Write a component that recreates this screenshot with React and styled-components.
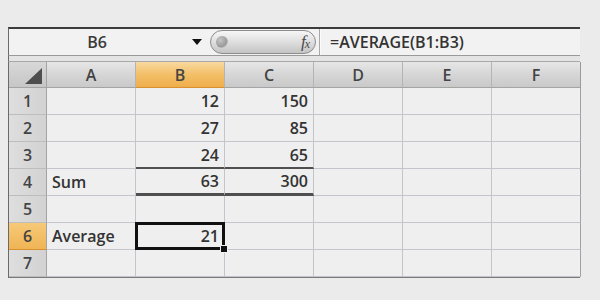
import React from "react";
import styled, { createGlobalStyle, css } from "styled-components";

const Global = createGlobalStyle`
  html, body { margin: 0; padding: 0; background: #ebebeb; }
  body { font-family: "Open Sans", "Liberation Sans", sans-serif; }
`;

const Page = styled.div`
  width: 600px;
  height: 300px;
  padding: 27px 0 0 8px;
  box-sizing: border-box;
  background: #ebebeb;
`;

const Sheet = styled.div`
  width: 572px;
  display: flex;
  flex-direction: column;
`;

const FormulaBar = styled.div`
  height: 29px;
  box-sizing: border-box;
  border-top: 2px solid #3c3c3c;
  border-left: 1px solid #6a6a6a;
  border-bottom: 1px solid #9a9a9a;
  display: flex;
  align-items: center;
  background: #f2f2f2;
`;

const NameBox = styled.div`
  width: 176px;
  text-align: center;
  font-size: 16px;
  font-weight: 600;
  color: #3a3a3a;
`;

const Arrow = styled.div`
  margin-left: 7px;
  width: 0;
  height: 0;
  border-left: 5px solid transparent;
  border-right: 5px solid transparent;
  border-top: 6px solid #111;
`;

const Pill = styled.div`
  margin-left: 8px;
  width: 106px;
  height: 24px;
  box-sizing: border-box;
  border: 1px solid #8c8c8c;
  border-radius: 13px;
  background: linear-gradient(#f6f6f6, #dcdcdc 55%, #c4c4c4);
  display: flex;
  align-items: center;
  justify-content: space-between;
  padding: 0 6px 0 5px;
`;

const Knob = styled.div`
  width: 12px;
  height: 12px;
  border-radius: 50%;
  background: radial-gradient(circle at 35% 35%, #bdbdbd, #8a8a8a 60%, #d8d8d8 80%);
  opacity: 0.8;
`;

const Fx = styled.span`
  font-family: "Liberation Serif", serif;
  font-style: italic;
  font-size: 17px;
  color: #4a4a4a;
  letter-spacing: -1px;
  sub { font-size: 12px; vertical-align: -1px; }
`;

const Separator = styled.div`
  margin-left: 3px;
  width: 1px;
  align-self: stretch;
  background: #a8a8a8;
  box-shadow: 1px 0 0 #fafafa;
`;

const FormulaText = styled.div`
  margin-left: 10px;
  font-size: 16px;
  font-weight: 600;
  color: #333;
`;

const Gap = styled.div`
  height: 5px;
  border-left: 1px solid #6a6a6a;
  border-bottom: 1px solid #a8a8a8;
  background: #e4e4e4;
`;

const Grid = styled.div`
  display: grid;
  grid-template-columns: 38px repeat(6, 89px);
  grid-template-rows: 26px repeat(7, 27px);
  border-left: 1px solid #6a6a6a;
  border-bottom: 1px solid #7a7a7a;
  width: 572px;
  box-sizing: border-box;
  background: #efefef;
`;

const headerBg = (active) =>
  active
    ? css`
        background: linear-gradient(#f9d9a0, #f3bf68 50%, #efae4c);
      `
    : css`
        background: linear-gradient(#e6e6e6, #d6d6d6 50%, #c9c9c9);
      `;

const ColHeader = styled.div`
  ${(p) => headerBg(p.$active)}
  border-right: 1px solid ${(p) => (p.$last ? "#9a9a9a" : "#b4b4b4")};
  border-bottom: 1px solid ${(p) => (p.$active ? "#d9902e" : "#a4a4a4")};
  box-sizing: border-box;
  display: flex;
  align-items: center;
  justify-content: center;
  font-size: 16px;
  font-weight: 600;
  color: #444;
`;

const Corner = styled.div`
  background: linear-gradient(#d8d8d8, #c6c6c6);
  border-right: 1px solid #a4a4a4;
  border-bottom: 1px solid #a4a4a4;
  box-sizing: border-box;
  display: flex;
  align-items: flex-end;
  justify-content: flex-end;
  padding: 0 4px 3px 0;
`;

const CornerTriangle = styled.div`
  width: 0;
  height: 0;
  border-left: 17px solid transparent;
  border-bottom: 16px solid #4e4e4e;
`;

const RowHeader = styled.div`
  ${(p) => headerBg(p.$active)}
  background: ${(p) =>
    p.$active ? "linear-gradient(#f6c978, #f0b455)" : "linear-gradient(90deg, #dedede, #d2d2d2)"};
  border-right: 1px solid #a4a4a4;
  border-bottom: 1px solid ${(p) => (p.$active ? "#d9902e" : "#bdbdbd")};
  box-sizing: border-box;
  display: flex;
  align-items: center;
  justify-content: center;
  font-size: 16px;
  font-weight: 600;
  color: #444;
`;

const Cell = styled.div`
  position: relative;
  box-sizing: border-box;
  border-right: 1px solid ${(p) => (p.$last ? "#a0a0a8" : "#c4c4cc")};
  border-bottom: ${(p) =>
    p.$rule ? `${p.$rule}px solid #4f4f4f` : "1px solid #c4c4cc"};
  display: flex;
  align-items: center;
  justify-content: ${(p) => (p.$num ? "flex-end" : "flex-start")};
  padding: 0 5px;
  font-size: 16px;
  font-weight: 600;
  color: #333;
  ${(p) =>
    p.$selected &&
    css`
      &::after {
        content: "";
        position: absolute;
        left: -1px;
        top: -1px;
        right: -1px;
        bottom: -1px;
        border: 3px solid #111;
        pointer-events: none;
      }
      &::before {
        content: "";
        position: absolute;
        right: -4px;
        bottom: -4px;
        width: 6px;
        height: 6px;
        background: #111;
        border: 1px solid #efefef;
        z-index: 2;
      }
    `}
`;

const cols = ["A", "B", "C", "D", "E", "F"];

const data = {
  1: { B: "12", C: "150" },
  2: { B: "27", C: "85" },
  3: { B: "24", C: "65" },
  4: { A: "Sum", B: "63", C: "300" },
  5: {},
  6: { A: "Average", B: "21" },
  7: {},
};

const rules = { 3: 2, 4: 3 };

export default function App() {
  return (
    <Page>
      <Global />
      <Sheet>
        <FormulaBar>
          <NameBox>B6</NameBox>
          <Arrow />
          <Pill>
            <Knob />
            <Fx>
              f<sub>x</sub>
            </Fx>
          </Pill>
          <Separator />
          <FormulaText>=AVERAGE(B1:B3)</FormulaText>
        </FormulaBar>
        <Gap />
        <Grid>
          <Corner>
            <CornerTriangle />
          </Corner>
          {cols.map((c, i) => (
            <ColHeader key={c} $active={c === "B"} $last={i === cols.length - 1}>
              {c}
            </ColHeader>
          ))}
          {[1, 2, 3, 4, 5, 6, 7].map((r) => (
            <React.Fragment key={r}>
              <RowHeader $active={r === 6}>{r}</RowHeader>
              {cols.map((c, i) => {
                const v = data[r][c];
                const rule = rules[r] && (c === "B" || c === "C") ? rules[r] : 0;
                return (
                  <Cell
                    key={c}
                    $num={c !== "A"}
                    $rule={rule}
                    $last={i === cols.length - 1}
                    $selected={r === 6 && c === "B"}
                  >
                    {v}
                  </Cell>
                );
              })}
            </React.Fragment>
          ))}
        </Grid>
      </Sheet>
    </Page>
  );
}
